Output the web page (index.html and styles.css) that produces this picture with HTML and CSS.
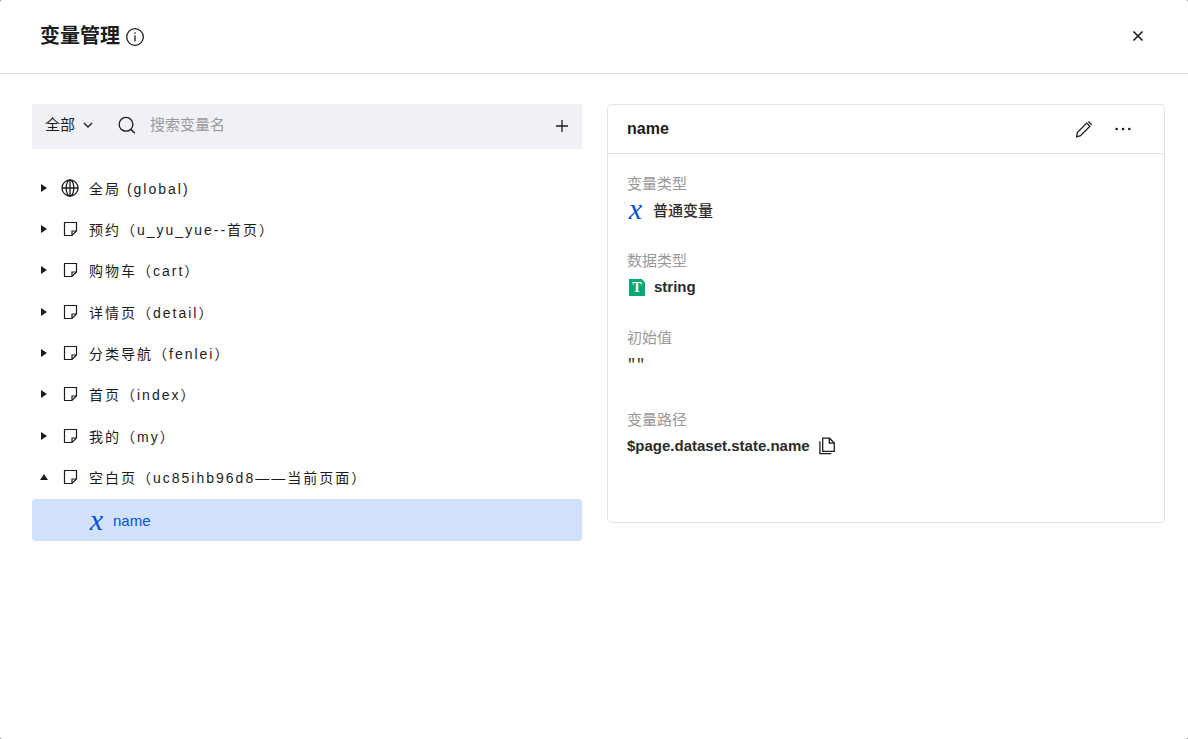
FILE: index.html
```html
<!DOCTYPE html>
<html lang="zh-CN">
<head>
    <meta charset="UTF-8">
    <meta name="viewport" content="width=device-width, initial-scale=1.0">
    <title>变量管理</title>
    <link rel="stylesheet" href="styles.css">
</head>
<body>
    <!-- shared icons -->
    <svg class="icon-defs" width="0" height="0" aria-hidden="true">
        <symbol id="icon-page" viewBox="0 0 18 18">
            <path d="M3.5 2.5h12v8.5l-4.5 4.5h-7.5zM15.5 11h-4.5v4.5" fill="none" stroke="currentColor" stroke-width="1.2"/>
        </symbol>
        <symbol id="icon-right" viewBox="0 0 8 10">
            <path d="M1 1v8l6-4z" fill="currentColor"/>
        </symbol>
        <symbol id="icon-up" viewBox="0 0 8 10">
            <path d="M0 8h8l-4-6z" fill="currentColor"/>
        </symbol>
    </svg>

    <div class="dialog">
        <header class="dialog-header">
            <h1>变量管理</h1>
            <svg class="info" width="20" height="20" viewBox="0 0 20 20">
                <circle cx="10" cy="10" r="8.3" fill="none" stroke="currentColor" stroke-width="1.3"/>
                <path d="M10 8.2v6.3M10 5.2v1.6" stroke="currentColor" stroke-width="1.3"/>
            </svg>
            <button type="button" class="icon-button close" aria-label="关闭">
                <svg width="20" height="20" viewBox="0 0 20 20">
                    <path d="M5.5 4.5l9 9M14.5 4.5l-9 9" stroke="currentColor" stroke-width="1.6"/>
                </svg>
            </button>
        </header>

        <main class="dialog-body">
            <section class="list-panel">
                <div class="toolbar">
                    <div class="filter">
                        <select aria-label="范围">
                            <option>全部</option>
                        </select>
                        <svg width="12" height="12" viewBox="0 0 12 12">
                            <path d="M2 4l4 4 4-4" fill="none" stroke="currentColor" stroke-width="1.3"/>
                        </svg>
                    </div>
                    <label class="search">
                        <svg width="20" height="20" viewBox="0 0 20 20">
                            <circle cx="9" cy="9.3" r="6.9" fill="none" stroke="currentColor" stroke-width="1.3"/>
                            <path d="M13.8 14.2l4 4" stroke="currentColor" stroke-width="1.4"/>
                        </svg>
                        <input type="text" placeholder="搜索变量名" aria-label="搜索变量名">
                    </label>
                    <button type="button" class="icon-button" aria-label="新建变量">
                        <svg width="20" height="20" viewBox="0 0 20 20">
                            <path d="M10 5v12M4 11h12" stroke="currentColor" stroke-width="1.3"/>
                        </svg>
                    </button>
                </div>

                <ul class="tree">
                    <li><button type="button" class="node">
                        <svg class="arrow"><use href="#icon-right"/></svg>
                        <svg class="node-icon" viewBox="0 0 18 18">
                            <g fill="none" stroke="currentColor" stroke-width="1.3">
                                <circle cx="9" cy="9" r="8"/>
                                <ellipse cx="9" cy="9" rx="3.8" ry="8"/>
                                <path d="M1 9h16M9 1v16"/>
                            </g>
                        </svg>
                        <span>全局 (global)</span>
                    </button></li>
                    <li><button type="button" class="node">
                        <svg class="arrow"><use href="#icon-right"/></svg>
                        <svg class="node-icon"><use href="#icon-page"/></svg>
                        <span>预约（u_yu_yue--首页）</span>
                    </button></li>
                    <li><button type="button" class="node">
                        <svg class="arrow"><use href="#icon-right"/></svg>
                        <svg class="node-icon"><use href="#icon-page"/></svg>
                        <span>购物车（cart）</span>
                    </button></li>
                    <li><button type="button" class="node">
                        <svg class="arrow"><use href="#icon-right"/></svg>
                        <svg class="node-icon"><use href="#icon-page"/></svg>
                        <span>详情页（detail）</span>
                    </button></li>
                    <li><button type="button" class="node">
                        <svg class="arrow"><use href="#icon-right"/></svg>
                        <svg class="node-icon"><use href="#icon-page"/></svg>
                        <span>分类导航（fenlei）</span>
                    </button></li>
                    <li><button type="button" class="node">
                        <svg class="arrow"><use href="#icon-right"/></svg>
                        <svg class="node-icon"><use href="#icon-page"/></svg>
                        <span>首页（index）</span>
                    </button></li>
                    <li><button type="button" class="node">
                        <svg class="arrow"><use href="#icon-right"/></svg>
                        <svg class="node-icon"><use href="#icon-page"/></svg>
                        <span>我的（my）</span>
                    </button></li>
                    <li>
                        <button type="button" class="node" aria-expanded="true">
                            <svg class="arrow"><use href="#icon-up"/></svg>
                            <svg class="node-icon"><use href="#icon-page"/></svg>
                            <span>空白页（uc85ihb96d8——当前页面）</span>
                        </button>
                        <button type="button" class="leaf selected">
                            <span class="var-icon">x</span>
                            <span>name</span>
                        </button>
                    </li>
                </ul>
            </section>

            <section class="detail">
                <div class="detail-header">
                    <h2>name</h2>
                    <button type="button" class="icon-button" aria-label="编辑">
                        <svg width="20" height="20" viewBox="0 0 20 20">
                            <g fill="none" stroke="currentColor" stroke-width="1.3">
                                <path d="M2.7 17.8l.6-4.3L12.7 4.1l3.2 3.2L6.5 16.7z"/>
                                <path d="M14.3 2.5l3.4 3.4"/>
                            </g>
                        </svg>
                    </button>
                    <button type="button" class="icon-button" aria-label="更多">
                        <svg width="20" height="20" viewBox="0 0 20 20">
                            <g fill="currentColor">
                                <circle cx="3.7" cy="10" r="1.3"/>
                                <circle cx="10" cy="10" r="1.3"/>
                                <circle cx="16.3" cy="10" r="1.3"/>
                            </g>
                        </svg>
                    </button>
                </div>
                <dl class="fields">
                    <dt>变量类型</dt>
                    <dd class="medium"><span class="var-icon">x</span>普通变量</dd>
                    <dt>数据类型</dt>
                    <dd><span class="type-icon">T</span>string</dd>
                    <dt>初始值</dt>
                    <dd class="code">""</dd>
                    <dt>变量路径</dt>
                    <dd>$page.dataset.state.name
                        <button type="button" class="icon-button copy" aria-label="复制">
                            <svg width="20" height="20" viewBox="0 0 20 20">
                                <path d="M3.7 3.2h6.8l4.8 4.8v8.4H3.7zM10.3 3.2v5h5M.9 6.2v12.4h11.4" fill="none" stroke="currentColor" stroke-width="1.3"/>
                            </svg>
                        </button>
                    </dd>
                </dl>
            </section>
        </main>
    </div>
</body>
</html>
```

FILE: styles.css
```css
* {
    box-sizing: border-box;
}

body {
    margin: 0;
    background-color: #777;
    color: #1c1c1c;
    font-family: "Liberation Sans", "Noto Sans CJK SC", sans-serif;
    font-size: 15px;
}

button,
input,
select {
    margin: 0;
    padding: 0;
    border: none;
    background: none;
    color: inherit;
    font: inherit;
}

button {
    cursor: pointer;
}

svg {
    display: block;
    flex: none;
}

.icon-defs {
    position: absolute;
}

.icon-button {
    display: flex;
    flex: none;
}

.dialog {
    min-height: 100vh;
    background-color: #fff;
    border-radius: 2px;
}

.dialog-header {
    display: flex;
    align-items: center;
    height: 74px;
    padding: 0 40px;
    border-bottom: 1px solid #d9dae3;
}

.dialog-header h1 {
    margin: 0;
    padding-bottom: 2px;
    font-size: 20px;
    line-height: 30px;
}

.info {
    margin-left: 5px;
}

.close {
    margin-left: auto;
}

.dialog-body {
    display: grid;
    grid-template-columns: 550fr 558fr;
    align-items: start;
    gap: 25px;
    padding: 30px 23px 30px 32px;
}

/* variable list */
.toolbar {
    display: flex;
    align-items: center;
    height: 45px;
    padding: 0 10px 4px 13px;
    background-color: #f0f1f6;
}

.filter {
    position: relative;
}

.filter select {
    width: 50px;
    height: 30px;
    appearance: none;
}

.filter svg {
    position: absolute;
    top: 9px;
    right: 1px;
    pointer-events: none;
}

.search {
    display: flex;
    flex: 1;
    align-items: center;
    gap: 13px;
    margin-left: 22px;
}

.search input {
    flex: 1;
    height: 30px;
    outline: none;
}

.search input::placeholder {
    color: #999;
}

.tree {
    margin: 0;
    padding: 18px 0 0;
    list-style: none;
}

.tree li:nth-child(3n) {
    padding-bottom: 1px;
}

.node,
.leaf {
    display: flex;
    align-items: center;
    width: 100%;
    text-align: left;
}

.node {
    height: 41px;
    padding-left: 8px;
    font-size: 14px;
    letter-spacing: 2px;
}

.arrow {
    width: 8px;
    height: 10px;
}

.node-icon {
    width: 18px;
    height: 18px;
    margin: 0 10px 0 13px;
}

.leaf {
    gap: 8px;
    height: 42px;
    margin-top: 2px;
    padding-left: 56px;
    border-radius: 4px;
}

.selected {
    background-color: #d2e1fa;
    color: #0052d9;
}

.var-icon {
    width: 17px;
    color: #0052d9;
    font-family: "Liberation Serif", serif;
    font-size: 30px;
    font-style: italic;
    font-weight: normal;
    line-height: 20px;
    text-align: center;
}

/* variable detail */
.detail {
    border: 1px solid #e3e4e9;
    border-radius: 4px;
}

.detail-header {
    display: flex;
    align-items: center;
    gap: 19px;
    height: 49px;
    padding: 0 31px 0 19px;
    border-bottom: 1px solid #e3e4e9;
}

.detail-header h2 {
    flex: 1;
    margin: 0;
    font-size: 16px;
}

.fields {
    margin: 0;
    padding: 17px 19px 38px;
}

.fields dt {
    color: #999;
    line-height: 26px;
}

.fields dd {
    display: flex;
    align-items: center;
    gap: 9px;
    height: 24px;
    margin: 0 0 27px;
    color: #2b2b2b;
    font-weight: 600;
}

.fields .medium {
    font-weight: 500;
}

.fields .code {
    height: 29px;
    font-family: "Liberation Mono", monospace;
    font-weight: normal;
}

.type-icon {
    width: 16px;
    height: 17px;
    margin: 3px 0 0 2px;
    background-color: #07a872;
    clip-path: polygon(0 0, 80% 0, 100% 20%, 100% 100%, 0 100%);
    color: #fff;
    font: bold 14px/18px "Liberation Serif", serif;
    text-align: center;
}

.copy {
    color: #1c1c1c;
}
```
